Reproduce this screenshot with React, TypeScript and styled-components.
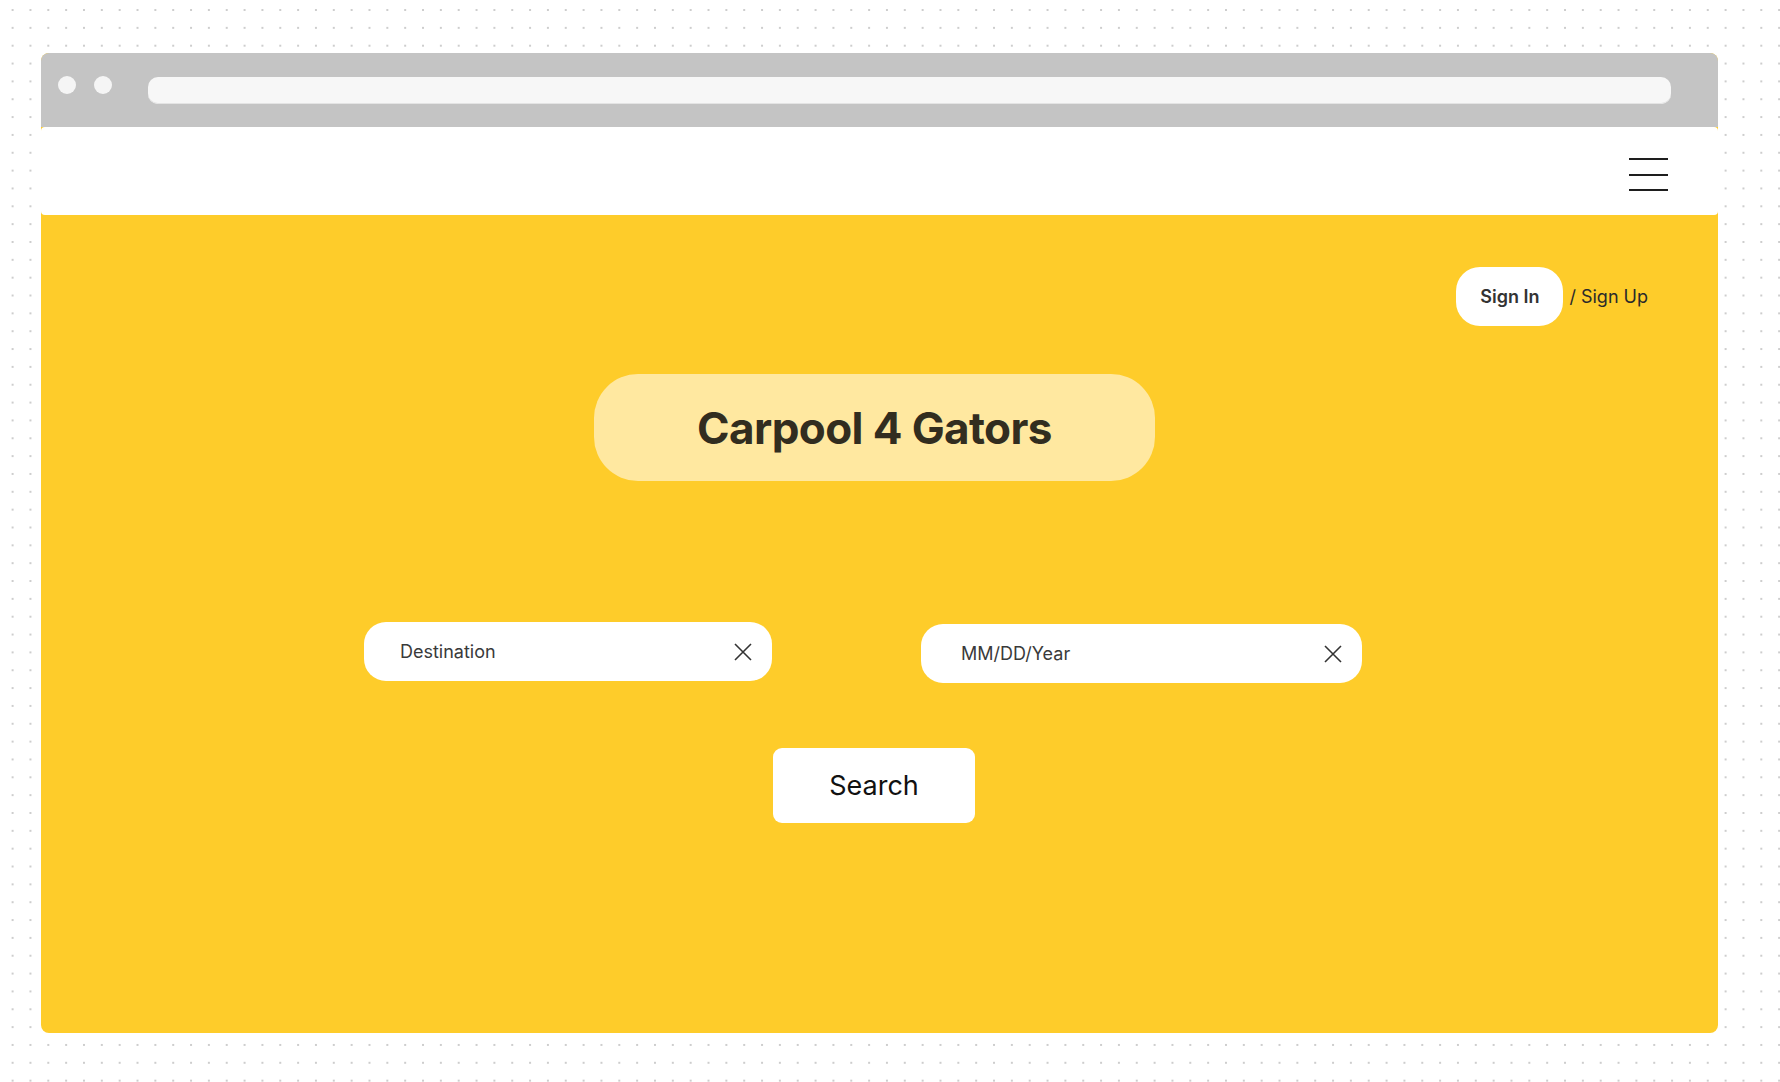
import React from "react";
import styled, { createGlobalStyle } from "styled-components";

const Global = createGlobalStyle`
  html, body {
    margin: 0;
    padding: 0;
    width: 1780px;
    height: 1082px;
    overflow: hidden;
    background-color: #ffffff;
    background-image: radial-gradient(circle, #cdcdcd 0.9px, transparent 1.4px);
    background-size: 17.85px 17.85px;
    background-position: 3.7px 1.1px;
    font-family: Inter, "Noto Sans", sans-serif;
  }
`;

const Page = styled.div`
  padding: 53px 0 0 41px;
`;

const Frame = styled.div`
  width: 1677px;
  height: 980px;
  display: flex;
  flex-direction: column;
  border-radius: 8px;
  overflow: hidden;
  background: #fecc2a;
`;

const Chrome = styled.div`
  height: 74px;
  flex: none;
  background: #c4c4c4;
  display: flex;
  align-items: flex-start;
  padding: 0 47px 0 17px;
  box-sizing: border-box;
`;

const Dots = styled.div`
  display: flex;
  gap: 18px;
  margin-top: 23px;
`;

const Dot = styled.span`
  width: 18px;
  height: 18px;
  border-radius: 50%;
  background: #f5f5f5;
`;

const AddressBar = styled.div`
  flex: 1;
  height: 27px;
  margin: 24px 0 0 36px;
  border-radius: 10px;
  background: #f7f7f7;
  box-shadow: inset 0 -1px 0 #e4e4e4;
`;

const Header = styled.header`
  height: 88px;
  flex: none;
  background: #ffffff;
  border-radius: 4px;
  display: flex;
  justify-content: flex-end;
  align-items: flex-start;
  padding: 31px 50px 0 0;
  box-sizing: border-box;
`;

const Hamburger = styled.div`
  width: 39px;
  display: flex;
  flex-direction: column;
  gap: 13.6px;
`;

const Line = styled.span`
  display: block;
  height: 2px;
  background: #1e1e1e;
`;

const Main = styled.main`
  flex: 1;
  display: flex;
  flex-direction: column;
  padding-top: 52px;
`;

const AuthRow = styled.div`
  display: flex;
  justify-content: flex-end;
  align-items: center;
  gap: 6px;
  padding-right: 70px;
`;

const SignInButton = styled.button`
  width: 107px;
  height: 59px;
  border: none;
  border-radius: 24px;
  background: #ffffff;
  font-family: Inter, sans-serif;
  font-weight: 600;
  font-size: 18px;
  color: #333333;
  cursor: pointer;
`;

const SignUpLink = styled.span`
  font-size: 18px;
  color: #2a2a2a;
`;

const TitlePill = styled.div`
  margin: 48px 0 0 553px;
  width: 561px;
  height: 107px;
  border-radius: 44px;
  background: #ffe8a0;
  display: flex;
  align-items: center;
  justify-content: center;
`;

const Title = styled.h1`
  margin: 0;
  font-family: Inter, sans-serif;
  font-weight: 700;
  font-size: 44px;
  color: #322d1f;
  letter-spacing: -0.6px;
`;

const InputRow = styled.div`
  display: flex;
  align-items: flex-start;
  gap: 149px;
  margin: 141px 0 0 323px;
`;

const Field = styled.div<{ $w: number; $drop?: number }>`
  width: ${(p) => p.$w}px;
  height: 59px;
  margin-top: ${(p) => p.$drop ?? 0}px;
  box-sizing: border-box;
  border-radius: 22px;
  background: #ffffff;
  display: flex;
  align-items: center;
  padding: 0 20px 0 ${(p) => (p.$w > 420 ? 40 : 36)}px;
`;

const FieldText = styled.span`
  flex: 1;
  font-size: 18px;
  color: #3a3a3a;
`;

const ClearIcon = styled.svg`
  width: 18px;
  height: 18px;
  flex: none;
`;

const SearchButton = styled.button`
  margin: 65px 0 0 732px;
  width: 202px;
  height: 75px;
  border: none;
  border-radius: 9px;
  background: #ffffff;
  font-family: Inter, sans-serif;
  font-size: 27px;
  font-weight: 400;
  color: #111111;
  cursor: pointer;
`;

const Clear = () => (
  <ClearIcon viewBox="0 0 18 18" fill="none">
    <path d="M1 1L17 17M17 1L1 17" stroke="#333" strokeWidth="1.6" />
  </ClearIcon>
);

export default function App() {
  return (
    <>
      <Global />
      <Page>
        <Frame>
          <Chrome>
            <Dots>
              <Dot />
              <Dot />
            </Dots>
            <AddressBar />
          </Chrome>
          <Header>
            <Hamburger>
              <Line />
              <Line />
              <Line />
            </Hamburger>
          </Header>
          <Main>
            <AuthRow>
              <SignInButton>Sign In</SignInButton>
              <SignUpLink>/ Sign Up</SignUpLink>
            </AuthRow>
            <TitlePill>
              <Title>Carpool 4 Gators</Title>
            </TitlePill>
            <InputRow>
              <Field $w={408}>
                <FieldText>Destination</FieldText>
                <Clear />
              </Field>
              <Field $w={441} $drop={2}>
                <FieldText>MM/DD/Year</FieldText>
                <Clear />
              </Field>
            </InputRow>
            <SearchButton>Search</SearchButton>
          </Main>
        </Frame>
      </Page>
    </>
  );
}
